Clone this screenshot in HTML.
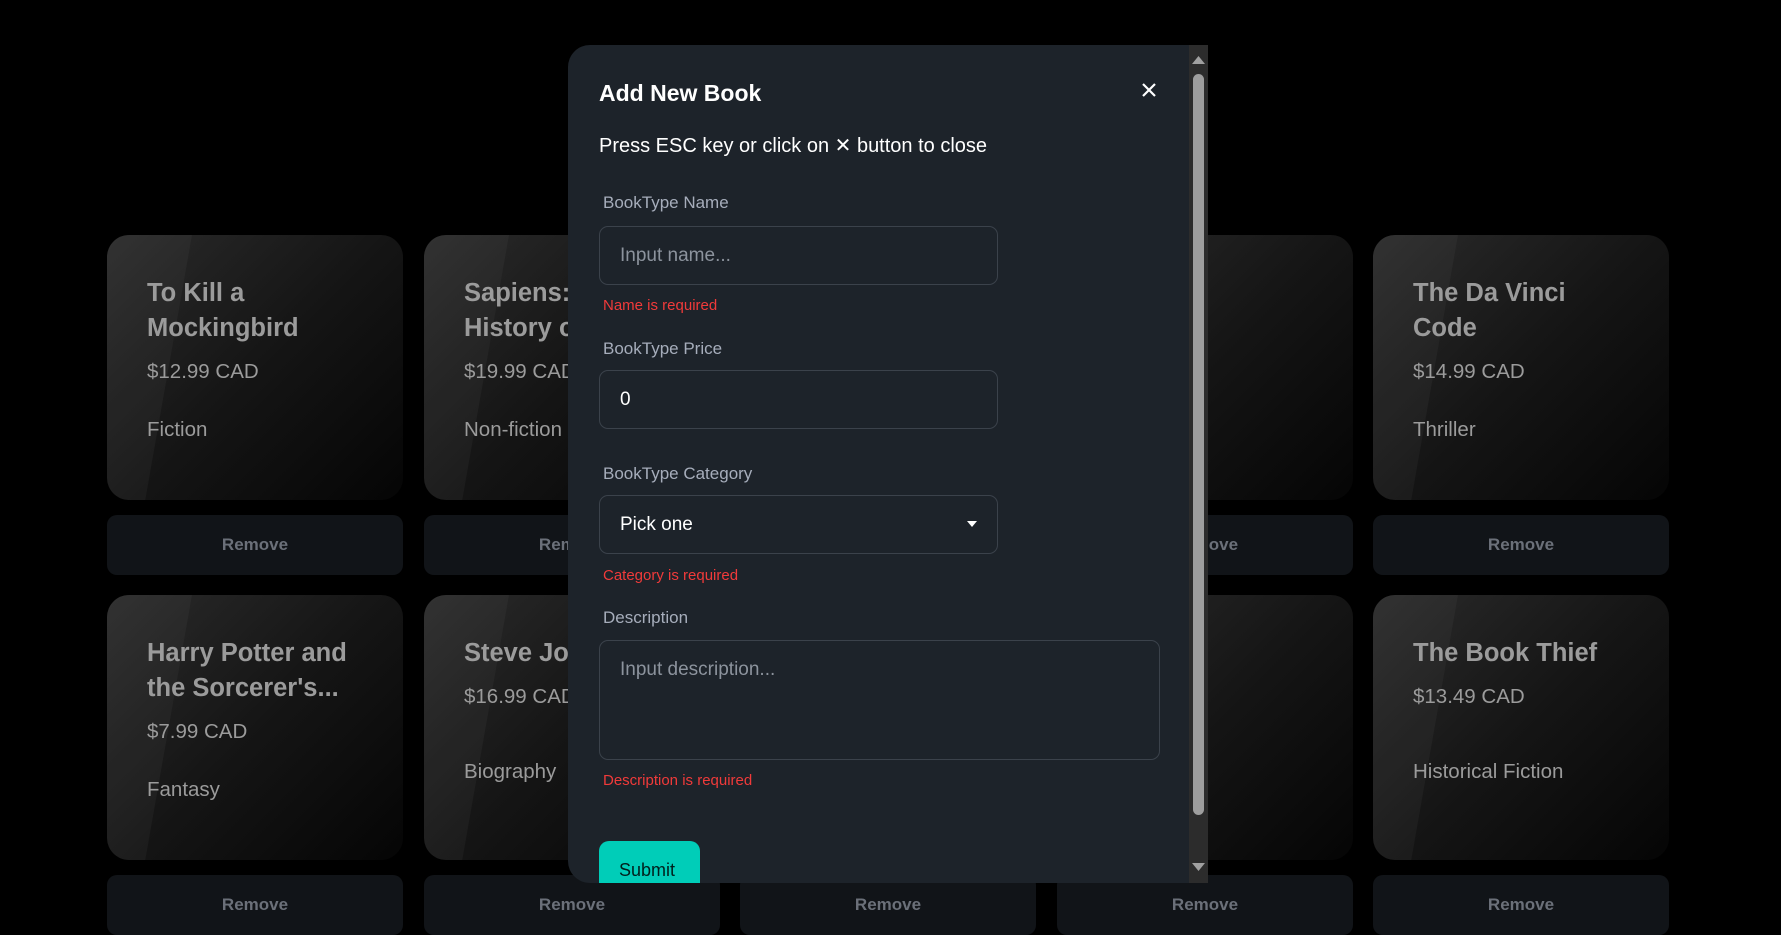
<!DOCTYPE html>
<html><head><meta charset="utf-8"><style>
*{box-sizing:border-box;margin:0;padding:0}
body{width:1781px;height:929px;background:#000;overflow:hidden;position:relative;font-family:"Liberation Sans",sans-serif}
.card{position:absolute;width:296px;height:265px;border-radius:22px;overflow:hidden;background:linear-gradient(135deg,#2b2b2b 0%,#151515 50%,#050505 100%);color:#9b9b9b}
.card:before{content:"";position:absolute;left:-40px;top:0;width:125px;height:100%;background:rgba(255,255,255,0.035);transform:skewX(-10deg);transform-origin:top left}
.card .t{position:absolute;left:40px;font-size:25.5px;font-weight:bold;line-height:35px;width:235px}
.card .p{position:absolute;left:40px;font-size:20.5px}
.card .c{position:absolute;left:40px;font-size:20.5px}
.rm{position:absolute;width:296px;height:60px;border-radius:10px;background:#111418;color:#6b7079;font-weight:bold;font-size:17px;text-align:center;line-height:60px}
.modal{position:absolute;left:568px;top:45px;width:640px;height:838px;background:#1d232a;border-radius:22px 0 0 22px;overflow:hidden}
.sb{position:absolute;right:0;top:0;width:19px;height:100%;background:#2c2c2c}
.thumb{position:absolute;left:4px;top:29px;width:11px;height:741px;background:#9e9e9e;border-radius:6px}
.lbl{position:absolute;left:35px;font-size:17px;color:#a6adbb}
.err{position:absolute;left:35px;font-size:15px;color:#f03a3a}
.inp{position:absolute;left:31px;width:399px;height:59px;border:1px solid #3b424b;border-radius:9px;font-size:19px;padding-left:20px;line-height:57px}
</style></head><body>
<div class="card" style="left:107px;top:235px"><div class="t" style="top:41px">To Kill a<br>Mockingbird</div><div class="p" style="top:125px">$12.99 CAD</div><div class="c" style="top:183px">Fiction</div></div>
<div class="card" style="left:424px;top:235px"><div class="t" style="top:41px">Sapiens: A<br>History of</div><div class="p" style="top:125px">$19.99 CAD</div><div class="c" style="top:183px">Non-fiction</div></div>
<div class="card" style="left:740px;top:235px"></div>
<div class="card" style="left:1057px;top:235px"></div>
<div class="card" style="left:1373px;top:235px"><div class="t" style="top:41px">The Da Vinci<br>Code</div><div class="p" style="top:125px">$14.99 CAD</div><div class="c" style="top:183px">Thriller</div></div>
<div class="rm" style="left:107px;top:515px">Remove</div><div class="rm" style="left:424px;top:515px">Remove</div><div class="rm" style="left:740px;top:515px">Remove</div><div class="rm" style="left:1057px;top:515px">Remove</div><div class="rm" style="left:1373px;top:515px">Remove</div>
<div class="card" style="left:107px;top:595px"><div class="t" style="top:41px">Harry Potter and<br>the Sorcerer's...</div><div class="p" style="top:125px">$7.99 CAD</div><div class="c" style="top:183px">Fantasy</div></div>
<div class="card" style="left:424px;top:595px"><div class="t" style="top:41px">Steve Jobs</div><div class="p" style="top:90px">$16.99 CAD</div><div class="c" style="top:165px">Biography</div></div>
<div class="card" style="left:740px;top:595px"></div>
<div class="card" style="left:1057px;top:595px"></div>
<div class="card" style="left:1373px;top:595px"><div class="t" style="top:41px">The Book Thief</div><div class="p" style="top:90px">$13.49 CAD</div><div class="c" style="top:165px">Historical Fiction</div></div>
<div class="rm" style="left:107px;top:875px">Remove</div><div class="rm" style="left:424px;top:875px">Remove</div><div class="rm" style="left:740px;top:875px">Remove</div><div class="rm" style="left:1057px;top:875px">Remove</div><div class="rm" style="left:1373px;top:875px">Remove</div>
<div class="modal">
<div style="position:absolute;left:31px;top:35px;font-size:23px;font-weight:bold;color:#fff">Add New Book</div>
<svg style="position:absolute;left:573px;top:37px" width="16" height="16"><path d="M2 2L14 14M14 2L2 14" stroke="#fff" stroke-width="2.2"/></svg>
<div style="position:absolute;left:31px;top:88px;font-size:20px;color:#fff">Press ESC key or click on ✕ button to close</div>
<div class="lbl" style="top:148px">BookType Name</div>
<div class="inp" style="top:181px;color:#8c939d">Input name...</div>
<div class="err" style="top:252px">Name is required</div>
<div class="lbl" style="top:294px">BookType Price</div>
<div class="inp" style="top:325px;color:#fff">0</div>
<div class="lbl" style="top:419px">BookType Category</div>
<div class="inp" style="top:450px;color:#fff">Pick one<svg style="position:absolute;right:20px;top:25px" width="10" height="6"><path d="M0 0H10L5 6Z" fill="#fff"/></svg></div>
<div class="err" style="top:522px">Category is required</div>
<div class="lbl" style="top:563px">Description</div>
<div class="inp" style="top:595px;width:561px;height:120px;line-height:normal;padding-top:18px;color:#8c939d">Input description...</div>
<div class="err" style="top:727px">Description is required</div>
<div style="position:absolute;left:31px;top:796px;width:101px;height:60px;background:#00cdb8;border-radius:10px;font-size:18px;color:#00201c;padding:19px 0 0 20px">Submit</div>
<div class="sb"><svg style="position:absolute;left:3px;top:11px" width="13" height="8"><path d="M0 8L6.5 0L13 8Z" fill="#a0a0a0"/></svg><div class="thumb"></div><svg style="position:absolute;left:3px;top:818px" width="13" height="8"><path d="M0 0L6.5 8L13 0Z" fill="#a0a0a0"/></svg></div>
</div>
</body></html>
